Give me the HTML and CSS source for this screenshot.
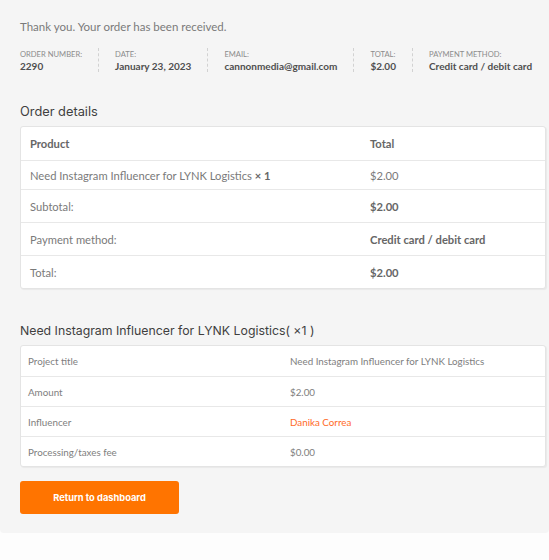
FILE: index.html
```html
<!DOCTYPE html>
<html>
<head>
  <title>Order received</title>
  <meta name="viewport" content="width=device-width, initial-scale=1.0">
  <link rel="stylesheet" href="styles.css">
</head>
<body>
  <div class="order-panel">
    <p class="thanks">Thank you. Your order has been received.</p>

    <ul class="overview">
      <li>
        <span class="label">Order number:</span>
        <strong>2290</strong>
      </li>
      <li>
        <span class="label">Date:</span>
        <strong>January 23, 2023</strong>
      </li>
      <li>
        <span class="label">Email:</span>
        <strong>cannonmedia@gmail.com</strong>
      </li>
      <li>
        <span class="label">Total:</span>
        <strong>$2.00</strong>
      </li>
      <li>
        <span class="label">Payment method:</span>
        <strong>Credit card / debit card</strong>
      </li>
    </ul>

    <h2>Order details</h2>
    <table class="details">
      <thead>
        <tr>
          <th class="col-product">Product</th>
          <th>Total</th>
        </tr>
      </thead>
      <tbody>
        <tr>
          <td>Need Instagram Influencer for LYNK Logistics <strong>&times;&nbsp;1</strong></td>
          <td>$2.00</td>
        </tr>
      </tbody>
      <tfoot>
        <tr>
          <td>Subtotal:</td>
          <td><strong>$2.00</strong></td>
        </tr>
        <tr>
          <td>Payment method:</td>
          <td><strong>Credit card / debit card</strong></td>
        </tr>
        <tr>
          <td>Total:</td>
          <td><strong>$2.00</strong></td>
        </tr>
      </tfoot>
    </table>

    <h3>Need Instagram Influencer for LYNK Logistics( &times;1 )</h3>
    <table class="project">
      <tr>
        <td class="col-key">Project title</td>
        <td>Need Instagram Influencer for LYNK Logistics</td>
      </tr>
      <tr>
        <td>Amount</td>
        <td>$2.00</td>
      </tr>
      <tr>
        <td>Influencer</td>
        <td><a href="#" class="influencer">Danika Correa</a></td>
      </tr>
      <tr>
        <td>Processing/taxes fee</td>
        <td>$0.00</td>
      </tr>
    </table>

    <a href="#" class="btn-dashboard">Return to dashboard</a>
  </div>
</body>
</html>
```

FILE: styles.css
```css
body {
  margin: 0;
  background: #fdfdfd;
  font-family: Lato, "Open Sans", Arial, sans-serif;
  color: #777;
}

.order-panel {
  background: #f5f5f5;
  padding: 18px 3px 19px 20px;
  border-radius: 0 0 4px 4px;
}

.thanks {
  margin: 0;
  font-size: 11.5px;
  line-height: 18px;
  color: #7a7a7a;
}

/* order summary strip */
.overview {
  display: flex;
  list-style: none;
  margin: 12px 0 0;
  padding: 0;
  white-space: nowrap;
}

.overview li {
  display: flex;
  flex-direction: column;
  padding: 0 16px;
  border-right: 1px dashed #d2d2d2;
}

.overview li:first-child {
  padding-left: 0;
}

.overview li:last-child {
  border-right: none;
  padding-right: 0;
}

.overview .label {
  font-size: 7.6px;
  line-height: 12px;
  text-transform: uppercase;
  color: #8c8c8c;
}

.overview strong {
  font-size: 10px;
  line-height: 12px;
  color: #4f4f4f;
}

h2, h3 {
  font-family: Inter, "Open Sans", sans-serif;
  font-weight: 400;
  color: #3f3f3f;
}

h2 {
  margin: 30px 0 4px;
  font-size: 12.8px;
  line-height: 20px;
}

h3 {
  margin: 33px 0 5px;
  font-size: 12.3px;
  line-height: 18px;
}

table {
  width: 100%;
  table-layout: fixed;
  border-collapse: separate;
  border-spacing: 0;
  background: #fff;
  border: 1px solid #e4e4e4;
  border-radius: 3px;
  box-shadow: 1px 1px 1px rgba(0, 0, 0, 0.05);
}

td, th {
  box-sizing: border-box;
  text-align: left;
  border-top: 1px solid #e8e8e8;
}

thead th {
  border-top: none;
}

.details th,
.details td {
  font-size: 11.2px;
  padding: 0 9px;
  height: 33px;
  color: #7a7a7a;
}

.details th {
  font-weight: 700;
  color: #666;
}

.details tbody td {
  height: 29px;
}

.details strong {
  color: #666;
}

.details .col-product {
  width: 340px;
}

.project tr:first-child td {
  border-top: none;
}

.project td {
  font-size: 9.8px;
  padding: 0 7px;
  height: 30px;
  color: #7e7e7e;
}

.project .col-key {
  width: 262px;
}

.influencer {
  color: #ff6a1f;
  text-decoration: none;
}

.btn-dashboard {
  display: flex;
  align-items: center;
  justify-content: center;
  width: 159px;
  height: 33px;
  margin-top: 14px;
  background: #ff7400;
  border-radius: 3px;
  font-family: Inter, sans-serif;
  font-weight: 700;
  font-size: 9.3px;
  color: #fff;
  text-decoration: none;
}
```
